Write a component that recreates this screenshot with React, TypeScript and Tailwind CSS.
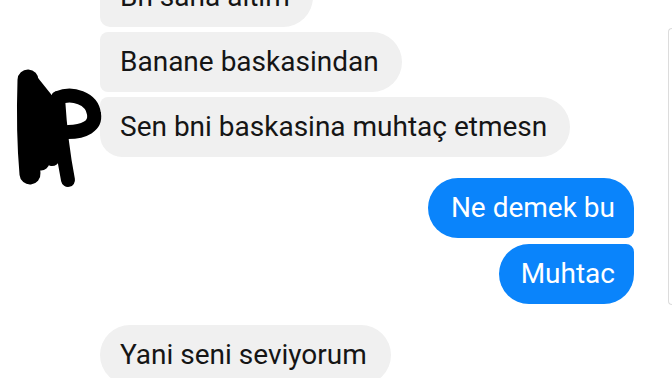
const received = [
  { text: "Bn sana aitim", shape: "rounded-l-[10px] rounded-r-[30px] rounded-tl-[30px]" },
  { text: "Banane baskasindan", shape: "rounded-l-[8px] rounded-r-[30px]" },
  { text: "Sen bni baskasina muhtaç etmesn", shape: "rounded-tl-[8px] rounded-bl-[22px] rounded-r-[30px]" },
];

// hand-drawn blot over the avatar
function Scribble() {
  return (
    <svg
      className="absolute left-0 top-[60px] pointer-events-none"
      width="110"
      height="135"
      viewBox="0 0 110 135"
    >
      <g stroke="#000" strokeLinecap="round" strokeLinejoin="round" fill="none">
        <path d="M28 20 C27 50 27 80 30 114" strokeWidth="21" />
        <path d="M38 35 C42 60 43 80 41 102" strokeWidth="17" />
        <path d="M30 20 L46 40" strokeWidth="15" />
        <path d="M46 50 C52 70 54 85 52 98" strokeWidth="16" />
        <path d="M58 38 C60 70 64 100 68 120" strokeWidth="14" />
        <path d="M58 38 C72 32 92 38 94 54 C96 66 84 72 68 72" strokeWidth="14" />
        <path d="M44 45 L56 48" strokeWidth="12" />
      </g>
    </svg>
  );
}

export default function App() {
  return (
    <div className="relative w-[672px] h-[378px] overflow-hidden bg-white font-['Roboto','Liberation_Sans',sans-serif] text-[28px] leading-none">
      <div className="flex items-start">
        <div className="w-[634px] flex flex-col">
          <div className="flex flex-col gap-[5px] pl-[100px] items-start mt-[-33px]">
            {received.map((m, i) => (
              <div
                key={i}
                className={`h-[60px] flex items-center pl-[20px] pr-[23px] bg-[#f0f0f0] text-[#151515] ${m.shape}`}
              >
                {m.text}
              </div>
            ))}
          </div>

          <div className="flex flex-col items-end gap-[6px] mt-[21px]">
            <div className="h-[60px] flex items-center pl-[23px] pr-[19px] bg-[#0a84fb] text-white rounded-l-[30px] rounded-tr-[30px] rounded-br-[8px]">
              Ne demek bu
            </div>
            <div className="h-[60px] flex items-center pl-[22px] pr-[19px] bg-[#0a84fb] text-white rounded-l-[30px] rounded-tr-[8px] rounded-br-[30px]">
              Muhtac
            </div>
          </div>

          <div className="flex pl-[100px] mt-[21px]">
            <div className="h-[60px] flex items-center pl-[20px] pr-[24px] bg-[#f0f0f0] text-[#151515] rounded-[30px]">
              Yani seni seviyorum
            </div>
          </div>
        </div>

        <div className="ml-[34px] mt-[28px] h-[277px] flex-1 border border-r-0 border-[#dcdcdc] rounded-l-[6px]" />
      </div>

      <Scribble />
    </div>
  );
}
